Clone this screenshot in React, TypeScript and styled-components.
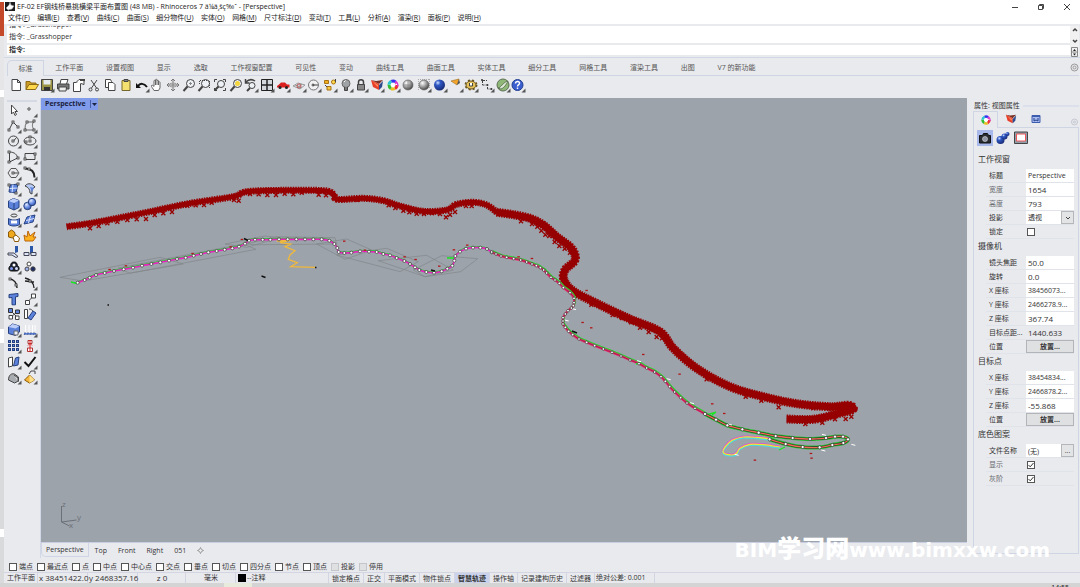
import React from 'react';
import styled, { createGlobalStyle } from 'styled-components';

const GlobalStyle = createGlobalStyle`
  * { box-sizing: border-box; }
  html, body { margin: 0; padding: 0; }
  body {
    font-family: "Open Sans", "Noto Sans", "Noto Sans CJK SC", sans-serif;
    font-size: 7px;
    line-height: 10px;
    color: #333;
    background: #e9eaee;
    overflow: hidden;
  }
  button, input, select {
    font: inherit;
    color: inherit;
    margin: 0;
    padding: 0;
    border: 0;
    border-radius: 0;
    background: none;
    min-width: 0;
  }
  h1, h2, p { margin: 0; font-size: inherit; font-weight: normal; }
`;

/* ---------- frame ---------- */
const Screen = styled.div`
  display: flex;
  flex-direction: column;
  height: 100vh;
`;
const Desk = styled.div`
  display: flex;
  flex: 1;
  min-height: 0;
`;
const Behind = styled.div`
  width: 4px;
  flex: none;
  display: flex;
  flex-direction: column;
  background: #d9dadc;
`;
const BehindBlock = styled.div<{ $h: number; $c: string }>`
  height: ${p => p.$h}px;
  background: ${p => p.$c};
`;
const Window = styled.div`
  flex: 1;
  min-width: 0;
  display: flex;
  flex-direction: column;
  background: #e9eaee;
`;
const TitleBar = styled.header`
  display: flex;
  align-items: center;
  height: 13px;
  background: #fff;
  padding: 0 1px;
  gap: 2px;
`;
const Title = styled.h1`
  flex: 1;
  white-space: nowrap;
  color: #222;
`;
const WinButton = styled.button`
  width: 24px;
  height: 12px;
  display: grid;
  place-items: center;
`;
const MenuBar = styled.nav`
  height: 11px;
  padding: 0 4px;
  background: #fff;
`;
const MenuItems = styled.div`
  display: flex;
  justify-content: space-between;
  max-width: 473px;
  button { white-space: nowrap; line-height: 10px; height: 10px; color: #222; }
`;
const CommandArea = styled.section`
  display: flex;
  padding: 2px 1px 2px 3px;
  border-bottom: 1px solid #cfd8e4;
`;
const CommandText = styled.div`
  flex: 1;
  display: flex;
  flex-direction: column;
  gap: 2px;
`;
const History = styled.div`
  height: 17px;
  background: #fff;
  overflow: hidden;
  display: flex;
  flex-direction: column;
  justify-content: flex-end;
  padding: 0 2px;
  p { line-height: 12px; flex: none; }
`;
const Prompt = styled.label`
  display: flex;
  height: 10px;
  padding: 0 2px;
  background: #fff;
  font-weight: bold;
  line-height: 9px;
  input { flex: 1; font-weight: normal; height: 9px; }
`;
const ScrollKeys = styled.div`
  width: 9px;
  display: flex;
  flex-direction: column;
  justify-content: space-between;
  background: #f1f1f2;
  button { display: grid; place-items: center; height: 8px; }
`;

/* ---------- toolbar ---------- */
const TabRow = styled.div`
  display: flex;
  align-items: stretch;
  height: 18px;
  padding: 2px 1px 0 3px;
`;
const ToolTabs = styled.div`
  display: flex;
  flex: none;
  width: 760px;
`;
const ToolTab = styled.button<{ $on?: boolean }>`
  flex: 1 0 auto;
  padding: 0 ${p => (p.$on ? 10 : 11)}px;
  white-space: nowrap;
  color: #555;
  line-height: 13px;
  border: solid #cfd5e3;
  border-width: ${p => (p.$on ? '1px 1px 0 1px' : '0 0 1px 0')};
  border-top-left-radius: ${p => (p.$on ? 5 : 0)}px;
`;
const TabFill = styled.div`
  flex: 1;
  display: flex;
  justify-content: flex-end;
  border-bottom: 1px solid #cfd5e3;
`;
const IconRow = styled.div`
  display: grid;
  grid-template-columns: repeat(33, minmax(0, 1fr));
  width: 518px;
  margin-left: 4px;
  height: 22px;
  padding-top: 1px;
`;
const IconColumn = styled.div`
  display: grid;
  grid-template-columns: 16px 16px;
  grid-template-rows: repeat(18, minmax(0, 1fr));
  height: 283px;
  margin-left: 1px;
`;
const IconButton = styled.button`
  display: grid;
  place-items: center;
  width: 16px;
  height: 16px;
`;
const Svg = styled.svg`
  display: block;
  fill: none;
  stroke: #444;
  stroke-width: 1;
`;

/* ---------- body ---------- */
const Body = styled.div`
  display: flex;
  flex: 1;
  min-height: 0;
`;
const Side = styled.aside`
  width: 37px;
  flex: none;
  padding: 2px 1px 0 1px;
  border-right: 1px solid #d3d8e6;
`;
const SideRule = styled.div`
  height: 2px;
  margin: 0 2px;
  background: #d5d9e3;
`;
const Center = styled.main`
  flex: 1;
  min-width: 0;
  display: flex;
  flex-direction: column;
`;
const Viewport = styled.div`
  position: relative;
  flex: 1;
  min-height: 0;
  background: #9ca3ab;
  overflow: hidden;
`;
const ViewLabel = styled.button`
  position: absolute;
  left: 0;
  top: 0;
  display: flex;
  align-items: center;
  height: 12px;
  padding-left: 4px;
  background: #7f9be9;
  color: #1c2340;
  font-weight: bold;
  gap: 4px;
`;
const Model = styled.svg`
  display: block;
  width: 100%;
  height: 100%;
  fill: none;
`;
const ViewTabs = styled.div`
  display: flex;
  align-items: flex-start;
  height: 16px;
  border-top: 1px solid #c9cfe0;
`;
const ViewTab = styled.button<{ $on?: boolean }>`
  height: 14px;
  padding: 0 ${p => (p.$on ? 4 : 5)}px 0 ${p => (p.$on ? 4 : 6)}px;
  line-height: 13px;
  border: solid #cfd5e6;
  border-width: ${p => (p.$on ? '0 1px 1px 1px' : '0')};
  border-bottom-left-radius: ${p => (p.$on ? 5 : 0)}px;
`;

/* ---------- properties ---------- */
const Panel = styled.aside`
  width: 113px;
  flex: none;
  padding: 2px 1px 4px 6px;
  display: flex;
  flex-direction: column;
`;
const PanelTitle = styled.h2`
  display: flex;
  align-items: center;
  height: 11px;
  padding-left: 1px;
  gap: 3px;
  white-space: nowrap;
  &::after { content: ""; flex: 1; height: 2px; background: #dcdfec; }
`;
const PanelTabs = styled.div`
  display: flex;
  height: 17px;
`;
const PanelTab = styled.button<{ $on?: boolean }>`
  width: 25px;
  display: grid;
  place-items: center;
  border: solid #cfd5e3;
  border-width: ${p => (p.$on ? '1px 1px 0 1px' : '0 0 1px 0')};
`;
const PanelBody = styled.div`
  flex: 1;
  border: solid #cfd5e3;
  border-width: 0 1px 1px 1px;
  padding: 2px 4px 0 3px;
`;
const PanelIcons = styled.div`
  display: flex;
  gap: 2px;
  margin-bottom: 6px;
`;
const PanelIcon = styled.button<{ $on?: boolean }>`
  width: 16px;
  height: 16px;
  display: grid;
  place-items: center;
  background: ${p => (p.$on ? '#a9b8ea' : 'transparent')};
`;
const GroupTitle = styled.h2`
  font-size: 8px;
  line-height: 14px;
  height: 17px;
  padding-left: 1px;
`;
const Field = styled.div`
  display: grid;
  grid-template-columns: 40px minmax(0, 1fr);
  height: 14px;
  margin-left: 9px;
  border-bottom: 1px solid #e0e3ea;
`;
const FieldLabel = styled.label<{ $dim?: boolean }>`
  padding-left: 3px;
  white-space: nowrap;
  line-height: 13px;
  color: ${p => (p.$dim ? '#6a6c70' : '#333')};
`;
const Value = styled.input<{ $plain?: boolean }>`
  width: 100%;
  height: 13px;
  padding-left: 2px;
  font-size: ${p => (p.$plain ? 7 : 8)}px;
  background: #fff;
`;
const Output = styled.output`
  padding-left: 2px;
  font-size: 8px;
  line-height: 13px;
`;
const Split = styled.div`
  display: flex;
  height: 13px;
  background: #fff;
`;
const Choice = styled.select`
  appearance: none;
  flex: 1;
  padding-left: 2px;
  background: #fff;
`;
const SmallKey = styled.button`
  flex: none;
  width: 13px;
  display: grid;
  place-items: center;
  background: #e3e4e6;
  border: 1px solid #b4b6ba;
  line-height: 8px;
`;
const PlaceButton = styled.button`
  height: 13px;
  background: #dfe0e2;
  border: 1px solid #b2b4b8;
  line-height: 10px;
  font-weight: bold;
`;
const Check = styled.input.attrs({ type: 'checkbox' })`
  appearance: none;
  flex: none;
  width: 8px;
  height: 8px;
  background: #fff;
  border: 1px solid #555;
  &:disabled { border-color: #c4c6ca; background: #dfe0e2; }
  &:checked {
    background: #fff url("data:image/svg+xml,%3Csvg xmlns='http://www.w3.org/2000/svg' viewBox='0 0 6 6'%3E%3Cpath d='M0.5 3l1.7 1.8L5.5 1' fill='none' stroke='%23333'/%3E%3C/svg%3E");
  }
`;
const CheckCell = styled.div`
  padding: 3px 0 0 1px;
  display: flex;
`;

/* ---------- bottom ---------- */
const Snaps = styled.div`
  display: flex;
  gap: 4px;
  height: 14px;
  padding: 3px 0 0 5px;
  align-items: center;
  label { display: flex; align-items: center; gap: 2px; white-space: nowrap; }
`;
const Status = styled.footer`
  display: flex;
  height: 11px;
  padding-left: 2px;
  border-top: 1px solid #d3d6e2;
`;
const Cell = styled.div<{ $w: number; $align?: string }>`
  width: ${p => p.$w}px;
  flex: none;
  text-align: ${p => p.$align || 'left'};
  border-right: 1px solid #d3d6e2;
  white-space: nowrap;
  padding-left: 1px;
  line-height: 9px;
`;
const Coord = styled(Cell)`
  font-size: 8px;
`;
const Toggle = styled.button<{ $on?: boolean }>`
  flex: none;
  padding: 0 3px;
  border-right: 1px solid #d3d6e2;
  white-space: nowrap;
  line-height: 9px;
  font-weight: ${p => (p.$on ? 'bold' : 'normal')};
  background: ${p => (p.$on ? '#cbd3ec' : 'transparent')};
`;
const Layer = styled.div`
  width: 93px;
  display: flex;
  align-items: center;
  gap: 1px;
  padding-left: 2px;
  border-right: 1px solid #d3d6e2;
  &::before { content: ""; width: 8px; height: 8px; background: #000; }
`;
const TaskBar = styled.div`
  height: 4px;
  flex: none;
  display: flex;
  background: #d3d4d3;
  overflow: hidden;
`;
const TaskItem = styled.div`
  margin-left: 224px;
  width: 28px;
  background: #e6ebdc;
`;
const Clock = styled.time`
  margin-left: auto;
  margin-right: 11px;
  line-height: 10px;
  color: #222;
`;
const Watermark = styled.div`
  position: absolute;
  right: 30px;
  bottom: 23px;
  color: #fff;
  font: bold 20px/27px "DejaVu Sans", "Noto Sans CJK SC", sans-serif;
  white-space: nowrap;
  pointer-events: none;
  b { font-size: 24px; }
`;

/* ---------- icons ---------- */
const more = <path d="M15.500 11.500v4h-4z" fill="#555" stroke="none" />;
const hues = ['#e33', '#e8c020', '#3b3', '#2bc4d0', '#33e', '#d3c'];
const Wheel = ({ r = 4 }: { r?: number }) => {
  const step = (Math.PI * 2 * r) / 6;
  return (
    <g strokeWidth="3">
      <circle cx="8" cy="8" r={r} fill="#fff" stroke="none" />
      {hues.map((h, i) => (
        <circle key={h} cx="8" cy="8" r={r} stroke={h} strokeDasharray={`${step} ${step * 5}`} strokeDashoffset={-step * i} />
      ))}
    </g>
  );
};
const wedge = (
  <g stroke="none">
    <path d="M2 3l5 1 7-1-4 4z" fill="#7a3326" />
    <path d="M2 3l8 4v6l-6-3z" fill="#e8402a" />
    <path d="M10 8l4-4-1 6-3 3z" fill="#2c4a8c" />
    <path d="M4 5l5 3v2z" fill="#ff9b66" />
  </g>
);
const lens = (
  <g>
    <circle cx="9.500" cy="6.500" r="4" fill="#eef2f6" />
    <path d="M6.500 9.500l-4 4.500" strokeWidth="2" />
  </g>
);
const corners = <path d="M2.500 5v-2.500h2.500M11 2.500h2.500v2.500M13.500 11v2.500h-2.500M5 13.500h-2.500v-2.500" />;

const topIcons: [string, React.ReactNode][] = [
  ['新建', <path d="M4 2.500h5.500l3 3v8h-8.500zM9.500 2.500v3h3" fill="#fff" />],
  ['打开', <g><path d="M2 12.500v-8h4l1 1.500h5v2" fill="#c99a25" stroke="#8d6a18" /><path d="M2 12.500l3-5h9.500l-3 5z" fill="#ffd84c" stroke="#8d6a18" /></g>],
  ['保存', <g><path d="M2.500 2.500h11v11h-11z" fill="#9a9244" /><path d="M4.500 3h7v4.500h-7z" fill="#e8ecef" stroke="none" /><path d="M5 10h6v3.500h-6z" fill="#333" stroke="none" />{more}</g>],
  ['打印', <g><path d="M5 7l1-4.500h7l-1.500 4.500" fill="#fff" /><path d="M2.500 7h11.500v5h-11.500z" fill="#777" /><path d="M4 10h7.500l-.5 4h-7z" fill="#eee" /></g>],
  ['属性', <g><path d="M2.500 5.500h7v9h-7z" fill="#fff" /><path d="M5 5.500l3-3h5v5l-3-1" fill="#fff" /><path d="M9 2h5v2h-5z" fill="#444" stroke="none" /></g>],
  ['剪切', <g><path d="M5 3l5.500 8M11 3l-5.500 8" /><circle cx="4.500" cy="12.500" r="1.500" /><circle cx="11" cy="12.500" r="1.500" /></g>],
  ['复制', <g><path d="M3.500 2.500h5l1 2v6h-6z" fill="#fff" /><path d="M6.500 5.500h4.500l2 2v6h-6.500z" fill="#fff" /></g>],
  ['粘贴', <g><path d="M4 3.500h8v10h-8z" fill="#f4e070" stroke="#77672a" /><path d="M6 2.500h4v2h-4z" fill="#888" /></g>],
  ['撤销', <g><path d="M4 9c2-3 6-3 9 1" stroke="#111" strokeWidth="2" /><path d="M2 6v5h5z" fill="#111" stroke="none" />{more}</g>],
  ['平移', <path d="M5 13.500c-1-2-3-4-2.500-5s2 .5 2.500 1v-5.500c0-1 1.500-1 1.500 0v-1c0-1 1.500-1 1.500 0v1c0-1 1.500-1 1.500 0v1.500c0-1 1.500-1 1.500 0v5.500l-1.500 2.500zM6.500 4v4M8 4v4M9.500 5v3" fill="#fff" stroke="#666" />],
  ['旋转', <g stroke="#777"><path d="M8 2v12M2 8h12M6 4l2-2 2 2M6 12l2 2 2-2M4 6l-2 2 2 2M12 6l2 2-2 2" /><ellipse cx="8" cy="8" rx="4" ry="2" stroke="#999" /></g>],
  ['缩放', <g>{lens}<path d="M8 6.500h3M9.500 5v3" stroke="#888" /></g>],
  ['框选缩放', <g>{lens}<path d="M4 3.500h8M13.500 4v8M3.500 4v3" strokeDasharray="1 1" /></g>],
  ['缩放至范围', <g>{corners}<circle cx="9" cy="7" r="3.500" fill="#eef2f6" /><path d="M6.500 9.500l-4 4" strokeWidth="2" /></g>],
  ['缩放选取', <g>{lens}<circle cx="9.500" cy="6.500" r="2.500" fill="#f4d63c" stroke="none" /></g>],
  ['恢复视图', <g><path d="M3 5c3-3 6-3 9-1M2.500 2v4h4" strokeWidth="1.500" /><circle cx="9" cy="8.500" r="3" fill="#eef2f6" /><path d="M7 11l-3 3" strokeWidth="2" />{more}</g>],
  ['四视图', <g><path d="M2.500 2.500h11v11h-11z" fill="#d3d8dc" stroke="#222" /><path d="M8 2v12M2 8h12" stroke="#222" strokeWidth="1.500" />{more}</g>],
  ['载具', <g><path d="M2 9l2-1.500 2-2h4l2 2h2.500v3h-12.500z" fill="#dc2020" stroke="none" /><circle cx="5" cy="10.500" r="1.500" fill="#222" stroke="none" /><circle cx="11.500" cy="10.500" r="1.500" fill="#222" stroke="none" />{more}</g>],
  ['工作平面', <g stroke="#999"><path d="M2 9l5-3 7 2-5 4zM4 8l7 2.500M6 11l5-4" /><circle cx="8" cy="9" r="2" stroke="#b55" />{more}</g>],
  ['圆', <g><circle cx="7.500" cy="8" r="5" stroke="#777" fill="#f2f2f4" /><path d="M7 8h5" /><circle cx="7" cy="8" r="1" />{more}</g>],
  ['选取', <g><path d="M2.500 3.500h4v3h-4z" fill="#f0b020" stroke="#a87310" /><circle cx="11.500" cy="5" r="2" fill="#ffd84c" stroke="#a87310" /><path d="M5 9.500h4v3.500h-4z" fill="#f4c843" stroke="#a87310" /><path d="M3 8l2 2M13.500 2v3" />{more}</g>],
  ['灯', <g><circle cx="8" cy="6.500" r="4" fill="#a0a3a6" stroke="#666" /><path d="M6.500 10v3.500h3v-3.500" fill="#777" /><path d="M6 5l1.500-1.500" stroke="#fff" />{more}</g>],
  ['锁定', <g><path d="M5.500 8v-3c0-3 5-3 5 0v3" strokeWidth="1.500" /><path d="M4.500 7.500h7v5.500h-7z" fill="#888" />{more}</g>],
  ['图层', <g>{wedge}{more}</g>],
  ['颜色', <g><Wheel />{more}</g>],
  ['着色', <g><circle cx="8" cy="8" r="5" fill="url(#grayBall)" stroke="#555" strokeWidth=".6" /><path d="M8 3v10M3 8h10" stroke="#777" strokeWidth=".5" /></g>],
  ['着色物件', <g><path d="M2 2.500h12M2.500 2v12M13.500 2v9" stroke="#aaa" strokeDasharray="1 1" /><circle cx="8" cy="8" r="5" fill="url(#grayBall)" stroke="#555" strokeWidth=".6" />{more}</g>],
  ['渲染', <g><circle cx="7.500" cy="8" r="5.500" fill="url(#blueBall)" stroke="none" />{more}</g>],
  ['聚光灯', <g><path d="M3 4l8-2-2 6z" fill="#f4a52a" stroke="#9a6b1c" strokeWidth=".6" /><path d="M9 8l2-6 1 4z" fill="#555" stroke="none" />{more}</g>],
  ['选项', <g><ellipse cx="8" cy="8" rx="5.500" ry="4.500" stroke="#6a5622" strokeWidth="2" strokeDasharray="2 2" /><ellipse cx="8" cy="8" rx="5" ry="4" fill="#e5c35a" stroke="#6a5622" /><path d="M6.500 6v3h3v-3" fill="#fff" stroke="#444" />{more}</g>],
  ['尺寸标注', <g><path d="M3.500 3v5h5v4h4M3 3.500h5" strokeDasharray="3 1" /><path d="M2.500 2.500h1v1h-1zM8 7.500h1v1h-1zM12 11.500h1v1h-1z" fill="#444" />{more}</g>],
  ['Grasshopper', <g><circle cx="8" cy="8" r="6" fill="#8fb878" stroke="#5c6f52" /><path d="M3 11c3 0 5-6 10-7-2 4-4 7-7 8z" fill="#dfe8d8" stroke="#445a3c" strokeWidth=".7" />{more}</g>],
  ['帮助', <g><circle cx="7.500" cy="8" r="5.500" fill="#3c5fd0" stroke="#23418f" /><path d="M5.500 6.500c0-3 4.500-2.500 4 0-.3 1.200-2 1.300-2 3M7.500 10.500v1.500" stroke="#fff" strokeWidth="1.400" />{more}</g>],
];

const box = '#5d82dc';
const edge = '#26417f';
const dot = (x: number, y: number, f = '#fff') => <rect x={x - 1} y={y - 1} width="2" height="2" fill={f} stroke="#333" strokeWidth=".8" />;
const sideIcons: [string, React.ReactNode][] = [
  ['选取', <path d="M5.500 3v9l2-2 1.500 3.500 1.500-1-1.500-3h2.500z" fill="#fff" />],
  ['点', <g><circle cx="7" cy="7" r="1.200" fill="#fff" />{more}</g>],
  ['多重直线', <g><path d="M3 12l4-8 6 6" />{dot(3, 12)}{dot(7, 4)}{dot(12, 9)}{more}</g>],
  ['控制点曲线', <g><path d="M3.500 12c-1-4 0-6 2-8h6c-2 3-1 6 1 8h-9" stroke="#666" />{dot(5, 4)}{dot(12, 3)}{dot(3, 12)}{dot(12, 12)}{more}</g>],
  ['圆', <g><circle cx="7.500" cy="8" r="5" /><path d="M7.500 8l3-3.500" />{dot(7, 8)}{more}</g>],
  ['椭圆', <g><ellipse cx="8" cy="8" rx="6" ry="4" />{dot(8, 8)}{dot(8, 4)}{dot(4, 9)}{more}</g>],
  ['圆弧', <g><path d="M3.500 3c5 0 8 3 8 6M3.500 3v10l8-4" />{dot(3, 3)}{dot(3, 13)}{dot(12, 9)}{more}</g>],
  ['矩形', <g><path d="M3 4.500h10v6h-10z" />{dot(3, 10)}{dot(13, 5)}{more}</g>],
  ['多边形', <g><path d="M5 3.500h5l3 4.500-3 4.500h-5l-3-4.500z" stroke="#555" /><path d="M7 8h5" />{dot(7, 8)}{more}</g>],
  ['圆角', <g><path d="M3 3.500c6 0 9.500 3 9.500 9" stroke="#222" strokeWidth="2" />{dot(3, 3)}{dot(7, 4)}{more}</g>],
  ['曲面', <g><path d="M4 4l8-1-2 9-7-1z" fill={box} stroke={edge} /><path d="M7 3.500l-1 8M3.500 7.500l8-.5" stroke="#dbe6ff" />{dot(3, 4)}{dot(12, 3)}{dot(10, 12)}{more}</g>],
  ['旋转曲面', <g><path d="M3 5c3-4 8-2 10 1l-3 2v5l-2-1c0-4-2-6-5-7z" fill="#b8caf6" stroke="#444" /><path d="M8 6l4 1-2 4z" fill={box} stroke="none" />{more}</g>],
  ['立方体', <g><path d="M2.500 5l5-2.500 5.500 2v7l-5 2.500-5.500-2.500z" fill={box} stroke={edge} /><path d="M2.500 5l5.500 2 5-2.500-5.500-2z" fill="#bccdf8" stroke="none" /><path d="M8 7v7" stroke={edge} />{more}</g>],
  ['布尔运算', <g><circle cx="5.500" cy="10" r="3.700" fill="url(#softBall)" stroke={edge} /><circle cx="10" cy="6" r="3.700" fill="url(#softBall)" stroke={edge} />{more}</g>],
  ['投影', <g><ellipse cx="8" cy="3.500" rx="3" ry="1.500" /><path d="M2.500 6.500c3 2 8 2 11 0v6c-3 2-8 2-11 0z" fill={box} stroke={edge} /><path d="M5 8.500h6v3h-6z" fill="#fff" stroke="none" />{more}</g>],
  ['网格', <g><path d="M2 12l3-7 8-2-2 7z" fill={box} stroke={edge} /><path d="M4 8.500l8-2M8.500 4l-2 7" stroke="#e3ebff" />{more}</g>],
  ['组合', <g><path d="M2.500 4l3-2 3 2 1 4-3 2-4-1z" fill="#f0a81c" stroke="#8a5a08" /><path d="M7 9l3-2 3.500 3-1 3.500h-4z" fill="#fff" stroke="#8a5a08" /></g>],
  ['炸开', <path d="M3 13l-1-6 3 2 1-6 2 5 5-4-2 5 3 0-3 4z" fill="#ffb21f" stroke="#b8640c" />],
  ['修剪', <g><path d="M9 2h3v6l-3 1z" fill="#2b57a8" stroke="none" /><path d="M2 9h6l4 3.500-2 1-4-2.500h-4z" fill="#dce6f6" stroke="#445" /></g>],
  ['分割', <g><path d="M8 2h3v7l-3 1z" fill="#2b57a8" stroke="none" /><path d="M2 8.500h5v3h-5zM9 8.500h5v3h-5z" fill="#dce6f6" stroke="#445" /></g>],
  ['群组', <g><path d="M8 3c3 0 3 2 3.500 3.500 2.500 2 2 5.500-1 5.500h-5c-3 0-3.500-3.500-1-5.500.5-1.500.5-3.500 3.500-3.500z" fill="#1d2030" stroke="#111" /><circle cx="8" cy="6" r="1.500" fill="#fff" stroke="none" /><circle cx="5.500" cy="9.500" r="1.500" fill="#7f9bea" stroke="none" /><circle cx="10.500" cy="9.500" r="1.500" fill="#d7dff5" stroke="none" />{more}</g>],
  ['解散群组', <g><circle cx="7" cy="5" r="2" fill="#fff" /><circle cx="5" cy="10" r="2" fill="#9db2ee" /><circle cx="11" cy="10" r="2.200" fill="#1d2a66" /></g>],
  ['编辑点', <g><path d="M3 4c5 0 8 4 8 9" stroke="#222" strokeWidth="1.500" />{dot(4, 4)}{dot(10, 10)}</g>],
  ['调整曲线', <g><path d="M3 3c5 1 9 5 9 10M3 6l9 1" stroke="#222" strokeWidth="1.300" />{dot(8, 6)}{more}</g>],
  ['文字', <path d="M3 3.500l9-1v3l-2.500.3v8h-3.500v-7.300l-3 .3z" fill={box} stroke={edge} />],
  ['移动', <g><path d="M3.500 9.500h4v4h-4zM9.500 3h4v4h-4z" fill="#fff" /><path d="M7 9.500l3-3" />{more}</g>],
  ['复制', <g><path d="M5 5l6 6M5 11l6-5" /><path d="M2.500 2.500h4v4h-4zM9.500 4h4v3.500h-4z" fill={box} stroke="#333" /><path d="M3 9.500h3.500v3.500h-3.500zM9.500 10h3.500v3.500h-3.500z" fill="#fff" /></g>],
  ['旋转', <g><path d="M2.500 3.500h3v9h-3z" fill="#fff" /><path d="M6 12l5-7 3 2-5 7z" fill={box} stroke={edge} /><path d="M7 3c2 0 3 1 4 2" /></g>],
  ['实体工具', <g><path d="M2.500 5l4-3 7 2v6l-4 3.500-7-2z" fill={box} stroke={edge} /><path d="M2.500 5l4-3 7 2-4 2.500z" fill="#bccdf8" stroke="none" /><path d="M8 9h4v4h-4z" fill="#e8eeff" stroke="#666" />{more}</g>],
  ['挤出', <g><path d="M3.500 3v7M7 3v7M10.500 3v7M13 3v6" stroke="#fff" /><path d="M2 11h12v1.500h-12z" fill={box} stroke={edge} strokeWidth=".6" strokeDasharray="2 1" />{more}</g>],
  ['阵列', <g>{[2.5, 6.5, 10.5].map(x => [2.5, 6.5, 10.5].map(y => <rect key={`${x}-${y}`} x={x} y={y} width="2" height="2" fill={box} stroke={edge} />))}{more}</g>],
  ['对齐', <g><path d="M6 2.500h4v3h-4zM5.500 10h5v3.500h-5z" fill="#fff" stroke="#a33" /><path d="M8 2v12M6 7.500l2-2 2 2" stroke="#d22" />{more}</g>],
  ['镜像', <g><path d="M2.500 4l4-1v9l-4 1z" fill="#fff" /><path d="M7.500 12l2-8 3.500-1-1 8z" fill={box} stroke={edge} />{more}</g>],
  ['检查', <g><path d="M2.500 8l4 4 7-9" stroke="#111" strokeWidth="2" />{more}</g>],
  ['布尔联集', <g><path d="M2.500 11c0-5 3-7 6-6l4 3v4l-4 2z" fill="#a9acb0" /><path d="M8 6l4 3v4" fill="#dfe1e4" />{more}</g>],
  ['金字塔', <g><path d="M2.500 11l5-5 5 5-5 3z" fill="#f6b63a" stroke="#8a5a08" /><path d="M7.500 6v8l5-3z" fill="#ffe08a" stroke="none" /><path d="M7 5l2-3h4v3" />{more}</g>],
];

const Tool = ({ name, art }: { name: string; art: React.ReactNode }) => (
  <IconButton aria-label={name}>
    <Svg width="16" height="16" viewBox="0 0 16 16">{art}</Svg>
  </IconButton>
);

type Pt = [number, number];
const sheet = (ox: number, oy: number, text: string): Pt[] =>
  text.trim().split(/\s+/).map(pair => {
    const [x, y] = pair.split(',').map(Number);
    return [ox + x / 3, oy + y / 3];
  });
const west = (t: string) => sheet(50, 170, t);
const east = (t: string) => sheet(430, 190, t);
const line = (pts: Pt[]) => 'M' + pts.map(p => `${p[0].toFixed(1)} ${p[1].toFixed(1)}`).join('L');
const smooth = (p: Pt[]) => {
  let d = `M${p[0][0]} ${p[0][1]}`;
  for (let i = 0; i < p.length - 1; i++) {
    const a = p[Math.max(i - 1, 0)], b = p[i], c = p[i + 1], e = p[Math.min(i + 2, p.length - 1)];
    d += `C${b[0] + (c[0] - a[0]) / 6} ${b[1] + (c[1] - a[1]) / 6} ${c[0] - (e[0] - b[0]) / 6} ${c[1] - (e[1] - b[1]) / 6} ${c[0]} ${c[1]}`;
  }
  return d;
};

const ridgeWest = west('50,170 120,160 200,145 300,125 420,100 550,80 590,65 700,61 820,62 850,72 862,88 940,85 1000,92 1050,108 1120,124 1190,120 1220,103 1270,97 1310,105 1342,128');
const ridgeEast = east('200,67 250,74 300,85 340,105 380,140 420,170 435,195 432,215 405,240 402,270 430,303 500,340 600,387 690,425 730,475 800,535 900,590 1000,620 1100,641 1200,650 1255,646 1268,658 1220,672 1150,688 1070,687');
const crosses = [
  ...west('120,175 146,168 172,160 202,155 232,150 260,148 288,147 314,135 340,130 366,126 412,107 437,106 462,105 485,98 552,90 566,92 600,72 626,73 652,75 678,75 704,71 730,73 755,68 806,74 828,76 922,90 1016,106 1036,114 1060,122 1078,127 1100,131 1122,132 1146,130 1170,132 1188,142 1200,134'),
  ...east('75,66 108,48 125,48 273,94 306,102 322,110 334,122 346,134 358,138 374,156 388,168 404,176 420,188 484,344 548,375 576,384 603,397 630,413 656,426 680,441 696,445 830,568 947,620 994,632 1046,652 1150,655 1198,656 1126,702 1177,698 1215,688 1247,687 1264,680'),
];
const trackWest = west('83,338 104,330 119,323 138,315 164,309 192,303 221,298 249,293 276,287 304,282 331,277 357,272 381,267 407,263 431,257 453,252 475,247 500,243 524,239 547,235 567,230 585,221 597,212 615,209 638,209 661,209 687,208 713,208 739,208 765,208 790,208 815,208 838,212 853,222 862,234 866,246 883,249 904,248 930,244 957,245 980,246 1000,252 1020,256 1040,264 1063,273 1080,282 1095,292 1108,300 1129,306 1152,308 1175,304 1192,296 1207,287 1213,272 1216,258 1230,245 1248,236 1269,233 1291,233 1311,237 1325,247');
const trackMid = east('185,186 198,192 213,198 230,202 251,206 272,210 290,216 306,222 319,227 331,233 341,240 350,249 363,262 375,270 388,280 400,293 420,308 432,325 432,338 430,347 424,354 414,362 406,372 399,383 399,393 399,402 406,412 416,424 428,434 447,447 470,457 494,467 520,477 546,487 573,498 600,510 627,521 650,534 674,546 693,560 706,574 719,590 734,606 752,623 771,639 795,655 825,672');
const trackEnd = east('825,672 858,689 892,706 937,718 986,728 1037,738 1088,744 1140,747 1188,744 1215,740 1239,740 1254,748 1240,759 1207,765 1169,772 1118,771 1067,762 1019,748');
const slabs = [
  '30,322 330,262 400,282 100,333', '205,294 580,222 618,238 240,310', '525,222 645,198 690,203 590,232',
  '590,222 680,200 855,203 860,222 620,224', '800,222 890,207 965,240 885,268', '860,255 1010,235 1105,275 1050,305',
  '985,272 1130,256 1210,300 1125,320', '1090,300 1175,257 1283,266 1232,305 1125,320',
].map(west);
const flecks = [
  ...west('178,298 227,287 427,250 541,230 575,208 882,213 944,240 1063,260 1096,268 1167,288 1211,239 1251,225'),
  ...east('265,200 305,205 469,301 457,397 483,413 639,493 748,552 846,641 882,670 974,810 1142,790 1144,804'),
];
const stair = west('680,213 720,211 690,218 722,222 705,230 735,242 720,255 715,268 742,278 722,290 797,292');
const loop = east('1019,747 980,742 940,741 908,750 886,770 880,788 905,795 920,790 930,775 960,763 1000,764 1050,771');
const glints = east('432,356 410,390 627,512 716,566 786,638 900,702 1182,733 1270,763 1180,780 920,793');

const Scene = () => (
  <Model viewBox="41 98 926 444" preserveAspectRatio="xMinYMin meet" role="img" aria-label="透视图模型">
    <defs>
      <radialGradient id="grayBall" cx=".35" cy=".3" r=".8">
        <stop offset="0" stopColor="#fff" /><stop offset=".5" stopColor="#999" /><stop offset="1" stopColor="#333" />
      </radialGradient>
      <radialGradient id="blueBall" cx=".35" cy=".3" r=".8">
        <stop offset="0" stopColor="#cfe0ff" /><stop offset=".3" stopColor="#2f58c4" /><stop offset="1" stopColor="#14246a" />
      </radialGradient>
      <radialGradient id="softBall" cx=".35" cy=".3" r=".8">
        <stop offset="0" stopColor="#dfe9ff" /><stop offset=".5" stopColor="#6f92e6" /><stop offset="1" stopColor="#2b4a9c" />
      </radialGradient>
    </defs>
    <g stroke="#83868a" strokeWidth=".7">{slabs.map((s, i) => <path key={i} d={line(s) + 'Z'} />)}</g>
    <g stroke="#960000">
      <path d={smooth(ridgeWest)} strokeWidth="5" />
      <path d={smooth(ridgeWest)} strokeWidth="7" strokeDasharray="1.500 1" />
      <path d={smooth(ridgeEast)} strokeWidth="7" />
      <path d={smooth(ridgeEast)} strokeWidth="9" strokeDasharray="1.500 1" />
      {crosses.map(([x, y], i) => <path key={i} d={`M${x - 2} ${y - 2}l4 4m0-4l-4 4`} strokeWidth="1.300" />)}
    </g>
    <path d={smooth(trackWest)} stroke="#22c82c" transform="translate(0 -1)" />
    <path d={smooth(trackWest)} stroke="#ec1fc0" strokeWidth="1.600" />
    <path d={smooth(trackMid)} stroke="#22d62c" strokeWidth="1.800" transform="translate(1 -1)" />
    <path d={smooth(trackMid)} stroke="#ee2468" strokeWidth="2.400" />
    <path d={smooth(trackMid)} stroke="#2b2b38" strokeWidth=".4" />
    <path d={smooth(trackEnd)} stroke="#22c82c" strokeWidth="4" />
    <path d={smooth(trackEnd)} stroke="#263028" strokeWidth="2.400" />
    <path d={smooth(trackEnd)} stroke="#ef6b55" strokeWidth="1.300" />
    <path d={smooth(loop)} stroke="#e24bd8" strokeWidth="2.600" />
    <path d={smooth(loop)} stroke="#4cd8e0" strokeWidth="1.600" transform="translate(0 1)" />
    <path d={smooth(loop)} stroke="#f4e92c" strokeWidth="1.200" />
    <path d={line(stair)} stroke="#f0b83c" strokeWidth="1.300" />
    <g stroke="#15e81e" strokeWidth="1.300">
      <path d="M71 282l6 1.500M447 258h7M709 414l7-2-4 3M779 450l6-3M636 364l4-1" />
    </g>
    <g stroke="#fff">{glints.map(([x, y], i) => <path key={i} d={`M${x - 2} ${y}l4 1`} />)}</g>
    <g fill="#fff" stroke="#333" strokeWidth=".7">
      {trackWest.map(([x, y], i) => <circle key={i} cx={x} cy={y} r="1.500" />)}
      {trackMid.map(([x, y], i) => <circle key={i} cx={x} cy={y} r="1.300" />)}
      {trackEnd.map(([x, y], i) => <circle key={i} cx={x} cy={y} r="1.600" />)}
    </g>
    <g fill="#b01818">{flecks.map(([x, y], i) => <rect key={i} x={x - 1} y={y - .5} width="2.500" height="1.300" />)}</g>
    <g stroke="#111" strokeWidth="1.600">
      <path d="M244 238.500l4 2M261.500 276l4 1.500M107.500 305h1.500M315 267.500h1.500M572 331l5 2M431 270l4 1" />
    </g>
    <g stroke="#6c7078">
      <path d="M61.500 506v16l15-2M61.500 522l8 4" />
    </g>
    <g fill="#6c7078" fontSize="8">
      <text x="62" y="507">z</text><text x="77" y="520">y</text><text x="69" y="528">x</text>
    </g>
  </Model>
);

/* ---------- data ---------- */
const menus: [string, string][] = [
  ['文件', 'F'], ['编辑', 'E'], ['查看', 'V'], ['曲线', 'C'], ['曲面', 'S'], ['细分物件', 'U'], ['实体', 'O'], ['网格', 'M'],
  ['尺寸标注', 'D'], ['变动', 'T'], ['工具', 'L'], ['分析', 'A'], ['渲染', 'R'], ['面板', 'P'], ['说明', 'H'],
];
const toolTabs = ['标准', '工作平面', '设置视图', '显示', '选取', '工作视窗配置', '可见性', '变动', '曲线工具', '曲面工具', '实体工具', '细分工具', '网格工具', '渲染工具', '出图', 'V7 的新功能'];
const snaps = ['端点', '最近点', '点', '中点', '中心点', '交点', '垂点', '切点', '四分点', '节点', '顶点', '投影', '停用'];

const Row = ({ id, label, value, dim, plain }: { id: string; label: string; value: string; dim?: boolean; plain?: boolean }) => (
  <Field>
    <FieldLabel htmlFor={id} $dim={dim}>{label}</FieldLabel>
    <Value id={id} defaultValue={value} $plain={plain} />
  </Field>
);
const PlaceRow = () => (
  <Field>
    <FieldLabel as="span">位置</FieldLabel>
    <PlaceButton>放置...</PlaceButton>
  </Field>
);
const CheckRow = ({ id, label, on, dim }: { id: string; label: string; on?: boolean; dim?: boolean }) => (
  <Field>
    <FieldLabel htmlFor={id} $dim={dim}>{label}</FieldLabel>
    <CheckCell><Check id={id} defaultChecked={on} /></CheckCell>
  </Field>
);

export default function App() {
  return (
    <>
      <GlobalStyle />
      <Screen>
        <Desk>
          <Behind>
            <BehindBlock $h={2} $c="#fff" />
            <BehindBlock $h={34} $c="#c4492b" />
            <BehindBlock $h={54} $c="#e6e6e8" />
            <BehindBlock $h={7} $c="#fff" />
            <BehindBlock $h={232} $c="#d9dadc" />
            <BehindBlock $h={14} $c="#fff" />
            <BehindBlock $h={186} $c="#d9dadc" />
            <BehindBlock $h={8} $c="#fff" />
          </Behind>
          <Window>
            <TitleBar>
              <Svg width="10" height="11" viewBox="0 0 10 11">
                <path d="M0 1h10v9h-10z" fill="#1c1c1e" stroke="none" />
                <path d="M1 7l3-3 1-3 1 3 3 1-2 3-4 1M3 10l2-2" fill="#fff" stroke="#999" strokeWidth=".5" />
              </Svg>
              <Title>EF-02 EF钢线桥悬挑横梁平面布置图 (48 MB) - Rhinoceros 7 ä¼ä¸šç‰ˆ - [Perspective]</Title>
              <WinButton aria-label="最小化"><Svg width="8" height="8" viewBox="0 0 8 8"><path d="M1 4.500h6" /></Svg></WinButton>
              <WinButton aria-label="还原"><Svg width="8" height="8" viewBox="0 0 8 8"><path d="M1.500 2.500h4v4h-4zM2.500 2.500v-1h4v4h-1" /></Svg></WinButton>
              <WinButton aria-label="关闭"><Svg width="8" height="8" viewBox="0 0 8 8"><path d="M1 1l6 6M7 1l-6 6" /></Svg></WinButton>
            </TitleBar>
            <MenuBar>
              <MenuItems>
                {menus.map(([t, k]) => <button key={t}>{t}(<u>{k}</u>)</button>)}
              </MenuItems>
            </MenuBar>
            <CommandArea>
              <CommandText>
                <History><p>指令: _Grasshopper</p><p>指令: _Grasshopper</p></History>
                <Prompt>指令: <input aria-label="指令" /></Prompt>
              </CommandText>
              <ScrollKeys>
                <button aria-label="上"><Svg width="6" height="6" viewBox="0 0 6 6"><path d="M1 4l2-2 2 2" strokeWidth="1.500" /></Svg></button>
                <button aria-label="下"><Svg width="6" height="6" viewBox="0 0 6 6"><path d="M1 2l2 2 2-2" strokeWidth="1.500" /></Svg></button>
                <button aria-label="展开"><Svg width="9" height="10" viewBox="0 0 9 10"><path d="M1.500.500h6v9h-6zM1 5h7" stroke="#888" /><path d="M3 4l1.500-2 1.500 2zM3 6.500l1.500 2 1.500-2z" fill="#222" stroke="none" /></Svg></button>
              </ScrollKeys>
            </CommandArea>
            <TabRow>
              <ToolTabs>
                {toolTabs.map((t, i) => <ToolTab key={t} $on={i === 0}>{t}</ToolTab>)}
              </ToolTabs>
              <TabFill>
                <Svg width="9" height="14" viewBox="0 0 9 14"><circle cx="4.500" cy="7.500" r="3.500" stroke="#999" /><circle cx="4.500" cy="7.500" r="1.500" stroke="#999" /></Svg>
              </TabFill>
            </TabRow>
            <IconRow>
              {topIcons.map(([n, a]) => <Tool key={n} name={n} art={a} />)}
            </IconRow>
            <Body>
              <Side>
                <SideRule />
                <IconColumn>
                  {sideIcons.map(([n, a]) => <Tool key={n} name={n} art={a} />)}
                </IconColumn>
              </Side>
              <Center>
                <Viewport>
                  <Scene />
                  <ViewLabel>
                    Perspective
                    <Svg width="8" height="12" viewBox="0 0 8 12"><path d="M.5 2v8" stroke="#4b5fa8" /><path d="M2 5h5l-2.500 3z" fill="#1c2340" stroke="none" /></Svg>
                  </ViewLabel>
                </Viewport>
                <ViewTabs>
                  <ViewTab $on>Perspective</ViewTab>
                  {['Top', 'Front', 'Right', '051'].map(t => <ViewTab key={t}>{t}</ViewTab>)}
                  <ViewTab aria-label="新增"><Svg width="7" height="7" viewBox="0 0 7 7"><path d="M3.500 .5l1 2 2 1-2 1-1 2-1-2-2-1 2-1z" stroke="#888" strokeWidth=".8" /></Svg></ViewTab>
                </ViewTabs>
              </Center>
              <Panel>
                <PanelTitle>属性: 视图属性</PanelTitle>
                <PanelTabs>
                  <PanelTab $on aria-label="属性"><Svg width="12" height="12" viewBox="1 1 14 14"><Wheel /></Svg></PanelTab>
                  <PanelTab aria-label="图层"><Svg width="12" height="12" viewBox="1 1 14 14">{wedge}</Svg></PanelTab>
                  <PanelTab aria-label="显示"><Svg width="10" height="10" viewBox="0 0 10 10"><path d="M1 1.500h8v7h-8z" fill="#a8bcf0" stroke="#3c5cae" /><path d="M1 2h8" stroke="#3c5cae" strokeWidth="2" /><path d="M3 4v3l2-1 2 1v-3" stroke="#27408c" /></Svg></PanelTab>
                  <TabFill><Svg width="9" height="15" viewBox="0 0 9 15"><circle cx="4.500" cy="11" r="3" stroke="#c3c7d0" /><circle cx="4.500" cy="11" r="1" stroke="#c3c7d0" /></Svg></TabFill>
                </PanelTabs>
                <PanelBody>
                  <PanelIcons>
                    <PanelIcon $on aria-label="相机"><Svg width="14" height="14" viewBox="0 0 14 14"><path d="M1.500 4.500h3l1-2h4l1 2h2v7.500h-11z" fill="#2a2c33" stroke="#111" /><circle cx="7" cy="8" r="2.500" fill="#8d93a5" stroke="#ddd" strokeWidth=".6" /></Svg></PanelIcon>
                    <PanelIcon aria-label="材质"><Svg width="14" height="14" viewBox="0 0 14 14"><circle cx="4.500" cy="9" r="4" fill="url(#blueBall)" stroke="none" /><circle cx="8.500" cy="5.500" r="3" fill="url(#blueBall)" stroke="none" /><circle cx="11.500" cy="3" r="2" fill="url(#blueBall)" stroke="none" /></Svg></PanelIcon>
                    <PanelIcon aria-label="底色"><Svg width="14" height="14" viewBox="0 0 14 14"><path d="M.5 1h13v11.500h-13z" fill="#8fa0ac" stroke="#444" /><path d="M2.500 3h9v7h-9z" fill="#fff" stroke="#e55" /></Svg></PanelIcon>
                  </PanelIcons>
                  <GroupTitle>工作视窗</GroupTitle>
                  <Row id="title" label="标题" value="Perspective" plain />
                  <Row id="width" label="宽度" value="1654" dim />
                  <Row id="height" label="高度" value="793" dim />
                  <Field>
                    <FieldLabel htmlFor="projection">投影</FieldLabel>
                    <Split>
                      <Choice id="projection"><option>透视</option></Choice>
                      <SmallKey aria-label="展开投影"><Svg width="6" height="6" viewBox="0 0 6 6"><path d="M1 2l2 2 2-2" /></Svg></SmallKey>
                    </Split>
                  </Field>
                  <CheckRow id="locked" label="锁定" />
                  <GroupTitle>摄像机</GroupTitle>
                  <Row id="lens" label="镜头焦距" value="50.0" />
                  <Row id="turn" label="旋转" value="0.0" />
                  <Row id="cx" label="X 座标" value="38456073..." plain />
                  <Row id="cy" label="Y 座标" value="2466278.9..." plain />
                  <Row id="cz" label="Z 座标" value="367.74" />
                  <Field><FieldLabel as="span">目标点距...</FieldLabel><Output>1440.633</Output></Field>
                  <PlaceRow />
                  <GroupTitle>目标点</GroupTitle>
                  <Row id="tx" label="X 座标" value="38454834..." plain />
                  <Row id="ty" label="Y 座标" value="2466878.2..." plain />
                  <Row id="tz" label="Z 座标" value="-55.868" />
                  <PlaceRow />
                  <GroupTitle>底色图案</GroupTitle>
                  <Field>
                    <FieldLabel htmlFor="file">文件名称</FieldLabel>
                    <Split><Value id="file" defaultValue="(无)" $plain /><SmallKey>...</SmallKey></Split>
                  </Field>
                  <CheckRow id="show" label="显示" on dim />
                  <CheckRow id="gray" label="灰阶" on dim />
                </PanelBody>
              </Panel>
            </Body>
            <Snaps>
              {snaps.map((s, i) => <label key={s}><Check disabled={i > 10} />{s}</label>)}
            </Snaps>
            <Status>
              <Cell $w={32}>工作平面</Cell>
              <Coord $w={50}>x 38451422.0</Coord>
              <Coord $w={50}>y 2468357.16</Coord>
              <Coord $w={48} $align="center">z 0</Coord>
              <Cell $w={50} $align="center">毫米</Cell>
              <Layer>--注释</Layer>
              {['锁定格点', '正交', '平面模式', '物件锁点', '智慧轨迹', '操作轴', '记录建构历史', '过滤器'].map(t => (
                <Toggle key={t} $on={t === '智慧轨迹'}>{t}</Toggle>
              ))}
              <Cell $w={60}>绝对公差: 0.001</Cell>
            </Status>
          </Window>
        </Desk>
        <TaskBar><TaskItem /><Clock>14:55</Clock></TaskBar>
      </Screen>
      <Watermark>BIM<b>学习网</b>www.bimxxw.com</Watermark>
    </>
  );
}
